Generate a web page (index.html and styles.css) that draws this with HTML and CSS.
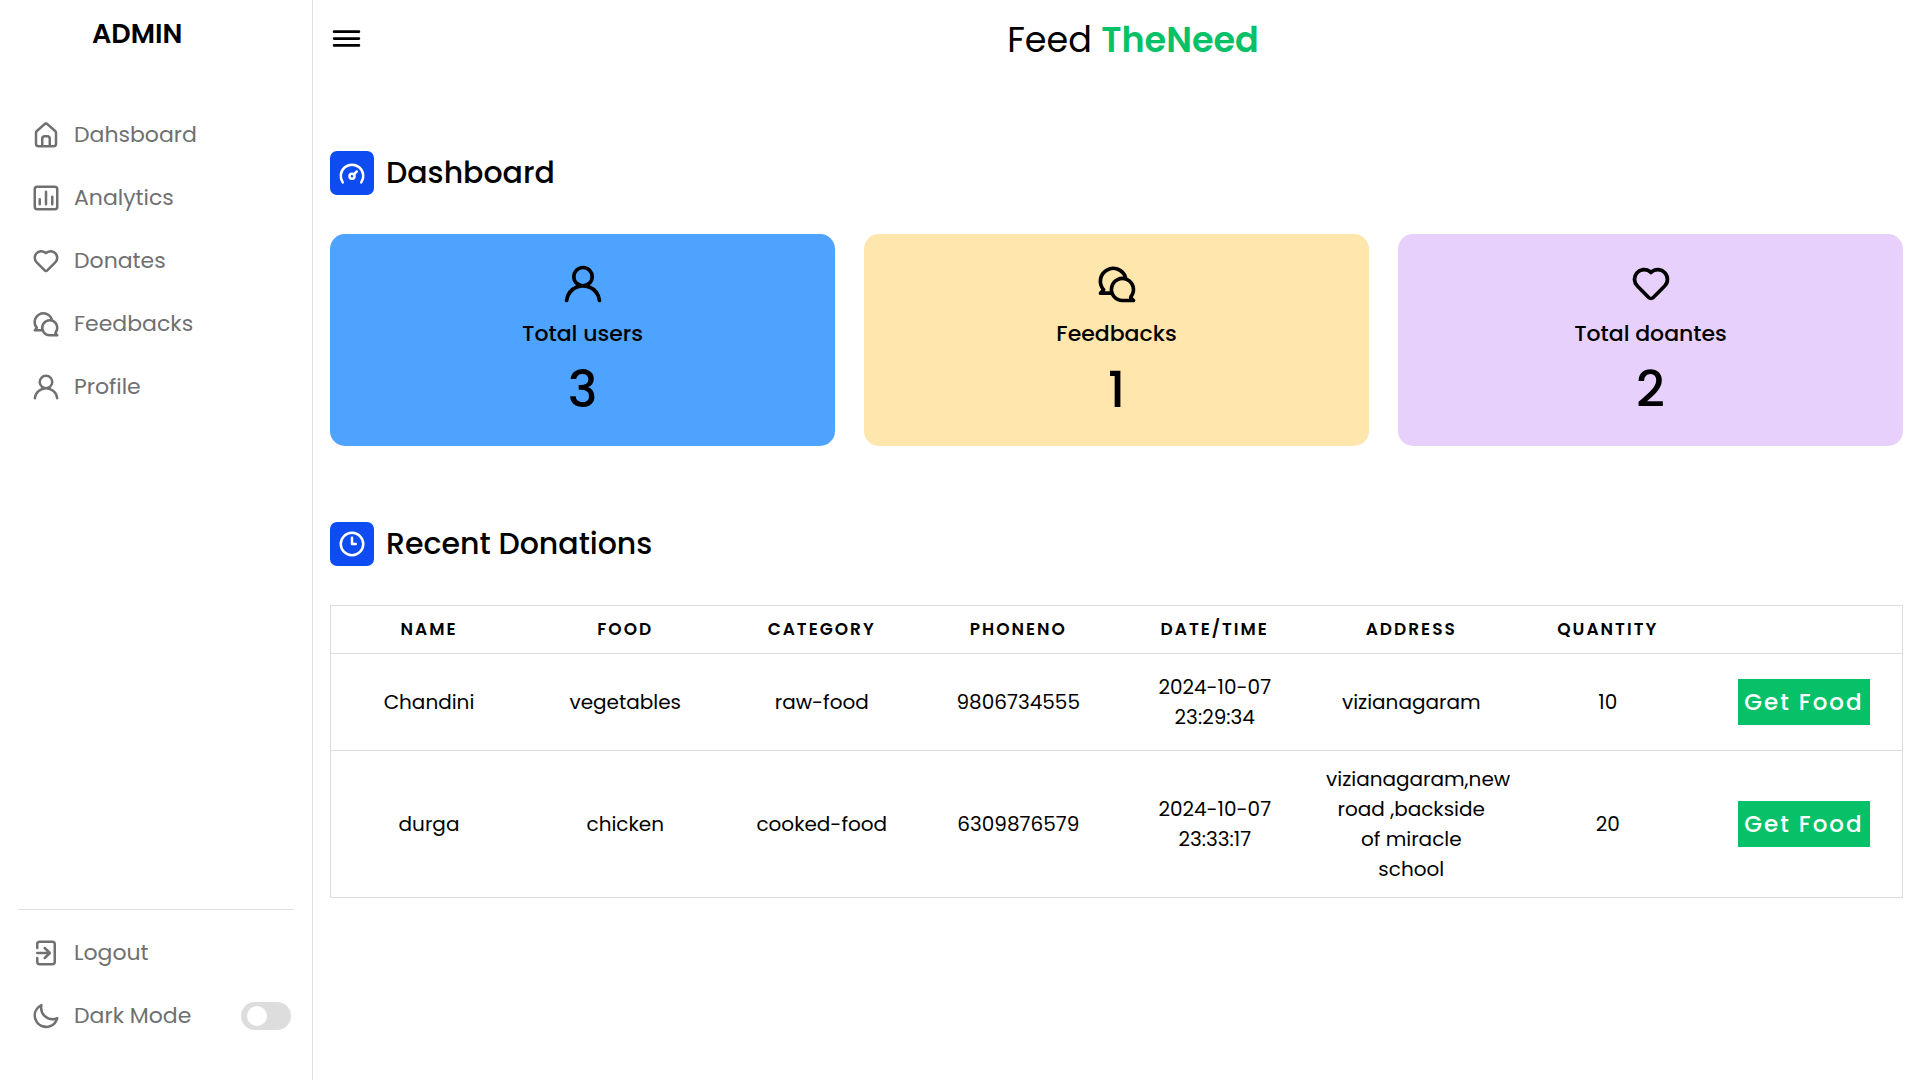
FILE: index.html
```html
<!DOCTYPE html>
<html lang="en">
<head>
  <meta charset="utf-8">
  <meta name="viewport" content="width=device-width, initial-scale=1">
  <title>Admin Dashboard</title>
  <link rel="stylesheet" href="styles.css">
</head>
<body>
  <svg class="sprite" aria-hidden="true">
    <symbol id="i-home" viewBox="0 0 24 24"><path d="M20,8L14,2.74a3,3,0,0,0-4,0L4,8a3,3,0,0,0-1,2.26V19a3,3,0,0,0,3,3H18a3,3,0,0,0,3-3V10.25A3,3,0,0,0,20,8ZM14,20H10V15a1,1,0,0,1,1-1h2a1,1,0,0,1,1,1Zm5-1a1,1,0,0,1-1,1H16V15a3,3,0,0,0-3-3H11a3,3,0,0,0-3,3v5H6a1,1,0,0,1-1-1V10.25a1,1,0,0,1,.34-.75l6-5.25a1,1,0,0,1,1.32,0l6,5.25a1,1,0,0,1,.34.75Z"/></symbol>
    <symbol id="i-chart" viewBox="0 0 24 24"><g fill="none" stroke="currentColor" stroke-width="2" stroke-linecap="round"><rect x="3" y="3" width="18" height="18" rx="2"/><path d="M7 13v4M12 7v10M17 11v6"/></g></symbol>
    <symbol id="i-heart" viewBox="0 0 24 24"><path d="M20.16,5A6.29,6.29,0,0,0,12,4.36a6.27,6.27,0,0,0-8.16,9.48l6.21,6.22a2.78,2.78,0,0,0,3.9,0l6.21-6.22A6.27,6.27,0,0,0,20.16,5Zm-1.41,7.46-6.21,6.21a.76.76,0,0,1-1.08,0L5.25,12.43a4.29,4.29,0,0,1,0-6,4.27,4.27,0,0,1,6,0,1,1,0,0,0,1.42,0,4.27,4.27,0,0,1,6,0A4.29,4.29,0,0,1,18.75,12.43Z"/></symbol>
    <symbol id="i-comments" viewBox="0 0 24 24"><g fill="none" stroke="currentColor" stroke-width="2" stroke-linecap="round" stroke-linejoin="round"><path d="M9 17H3l1.700-1.900A7 7 0 1 1 16.600 8.300"/><path d="M15 21a6 6 0 1 1 4.700-2.300L19.500 19.500 21 21z"/></g></symbol>
    <symbol id="i-user" viewBox="0 0 24 24"><path d="M15.71,12.71a6,6,0,1,0-7.42,0,10,10,0,0,0-6.22,8.18,1,1,0,0,0,2,.22,8,8,0,0,1,15.9,0,1,1,0,0,0,1,.89h.11a1,1,0,0,0,.88-1.1A10,10,0,0,0,15.71,12.71ZM12,12a4,4,0,1,1,4-4A4,4,0,0,1,12,12Z"/></symbol>
    <symbol id="i-signout" viewBox="0 0 24 24"><path d="M4,12a1,1,0,0,0,1,1h7.59l-2.3,2.29a1,1,0,0,0,0,1.42,1,1,0,0,0,1.42,0l4-4a1,1,0,0,0,.21-.33,1,1,0,0,0,0-.76,1,1,0,0,0-.21-.33l-4-4a1,1,0,1,0-1.42,1.42L12.59,11H5A1,1,0,0,0,4,12ZM17,2H7A3,3,0,0,0,4,5V8A1,1,0,0,0,6,8V5A1,1,0,0,1,7,4H17a1,1,0,0,1,1,1V19a1,1,0,0,1-1,1H7a1,1,0,0,1-1-1V16a1,1,0,0,0-2,0v3a3,3,0,0,0,3,3H17a3,3,0,0,0,3-3V5A3,3,0,0,0,17,2Z"/></symbol>
    <symbol id="i-moon" viewBox="0 0 24 24"><path d="M21.64,13a1,1,0,0,0-1.05-.14,8.05,8.05,0,0,1-3.37.73A8.15,8.15,0,0,1,9.08,5.49a8.59,8.59,0,0,1,.25-2A1,1,0,0,0,8,2.36,10.14,10.14,0,1,0,22,14.05,1,1,0,0,0,21.64,13Zm-9.5,6.69A8.14,8.14,0,0,1,7.08,5.22v.27A10.15,10.15,0,0,0,17.22,15.63a9.79,9.79,0,0,0,2.1-.22A8.11,8.11,0,0,1,12.14,19.73Z"/></symbol>
    <symbol id="i-bars" viewBox="0 0 24 24"><path d="M3 7h18M3 12h18M3 17h18" fill="none" stroke="currentColor" stroke-width="2" stroke-linecap="round"/></symbol>
    <symbol id="i-gauge" viewBox="0 0 24 24"><g fill="none" stroke="currentColor" stroke-width="2" stroke-linecap="round"><path d="M4.600 19.500a9 9 0 1 1 14.800 0"/><circle cx="12" cy="14.600" r="2"/><path d="M13.500 13.100l2.300-2.300"/></g></symbol>
    <symbol id="i-clock" viewBox="0 0 24 24"><g fill="none" stroke="currentColor" stroke-width="2" stroke-linecap="round" stroke-linejoin="round"><circle cx="12" cy="12" r="9"/><path d="M12 7v5h3"/></g></symbol>
  </svg>

  <div class="layout">
    <nav class="sidebar" aria-label="Main">
      <div class="brand">ADMIN</div>
      <ul class="menu menu-main">
        <li><a class="menu-link" href="#dashboard"><svg class="icon"><use href="#i-home"/></svg>Dahsboard</a></li>
        <li><a class="menu-link" href="#analytics"><svg class="icon"><use href="#i-chart"/></svg>Analytics</a></li>
        <li><a class="menu-link" href="#donates"><svg class="icon"><use href="#i-heart"/></svg>Donates</a></li>
        <li><a class="menu-link" href="#feedbacks"><svg class="icon"><use href="#i-comments"/></svg>Feedbacks</a></li>
        <li><a class="menu-link" href="#profile"><svg class="icon"><use href="#i-user"/></svg>Profile</a></li>
      </ul>
      <ul class="menu menu-bottom">
        <li><a class="menu-link" href="#logout"><svg class="icon"><use href="#i-signout"/></svg>Logout</a></li>
        <li class="mode">
          <label class="menu-link" for="dark-mode"><svg class="icon"><use href="#i-moon"/></svg>Dark Mode</label>
          <input class="switch" type="checkbox" id="dark-mode">
        </li>
      </ul>
    </nav>

    <main class="main">
      <header class="top">
        <button class="toggle" type="button" aria-label="Toggle sidebar"><svg class="icon-bars"><use href="#i-bars"/></svg></button>
        <p class="logo">Feed <b class="logo-accent">TheNeed</b></p>
      </header>

      <section class="section" id="dashboard">
        <h2 class="title"><span class="title-icon"><svg class="icon"><use href="#i-gauge"/></svg></span>Dashboard</h2>
        <div class="cards">
          <div class="card card-blue"><svg class="card-icon"><use href="#i-user"/></svg><span class="card-label">Total users</span><span class="card-number">3</span></div>
          <div class="card card-yellow"><svg class="card-icon"><use href="#i-comments"/></svg><span class="card-label">Feedbacks</span><span class="card-number">1</span></div>
          <div class="card card-purple"><svg class="card-icon"><use href="#i-heart"/></svg><span class="card-label">Total doantes</span><span class="card-number">2</span></div>
        </div>
      </section>

      <section class="section">
        <h2 class="title"><span class="title-icon"><svg class="icon"><use href="#i-clock"/></svg></span>Recent Donations</h2>
        <table class="table">
          <thead>
            <tr><th scope="col">Name</th><th scope="col">food</th><th scope="col">Category</th><th scope="col">phoneno</th><th scope="col">date/time</th><th scope="col">address</th><th scope="col">Quantity</th><td></td></tr>
          </thead>
          <tbody>
            <tr><td>Chandini</td><td>vegetables</td><td>raw-food</td><td>9806734555</td><td>2024-10-07 23:29:34</td><td>vizianagaram</td><td>10</td><td class="action"><button class="get" type="button">Get Food</button></td></tr>
            <tr><td>durga</td><td>chicken</td><td>cooked-food</td><td>6309876579</td><td>2024-10-07 23:33:17</td><td>vizianagaram,new road ,backside of miracle school</td><td>20</td><td class="action"><button class="get" type="button">Get Food</button></td></tr>
          </tbody>
        </table>
      </section>
    </main>
  </div>
</body>
</html>
```
FILE: styles.css
```css
* {
  box-sizing: border-box;
  margin: 0;
  padding: 0;
}

body {
  font-family: Poppins, "Open Sans", "Noto Sans", sans-serif;
  color: #000;
  background: #fff;
}

svg {
  display: block;
  flex: none;
  fill: currentColor;
}

.sprite {
  display: none;
}

.layout {
  display: flex;
  min-height: 100vh;
}

/* Sidebar */
.sidebar {
  display: flex;
  flex-direction: column;
  flex: none;
  width: 313px;
  padding: 12px 18px;
  border-right: 1px solid #e0e0e0;
}

.brand {
  padding-left: 74px;
  font-size: 27px;
  font-weight: 600;
  line-height: 44px;
}

.menu {
  list-style: none;
}

.menu-main {
  margin-top: 47px;
}

.menu-bottom {
  margin-top: auto;
  padding: 11px 0 21px;
  border-top: 1px solid #e0e0e0;
}

.menu-link {
  display: flex;
  align-items: center;
  gap: 13px;
  height: 63px;
  padding-left: 13px;
  font-size: 22px;
  color: #707070;
  text-decoration: none;
}

.icon {
  width: 30px;
  height: 30px;
}

.mode {
  display: flex;
  align-items: center;
  justify-content: space-between;
  padding-right: 3px;
}

.switch {
  appearance: none;
  width: 50px;
  height: 28px;
  padding: 4px 6px;
  border-radius: 14px;
  background: #ddd;
  cursor: pointer;
}

.switch::before {
  content: "";
  display: block;
  width: 20px;
  height: 20px;
  border-radius: 50%;
  background: #fff;
}

.switch:checked::before {
  margin-left: auto;
}

/* Main column */
.main {
  flex: 1;
  min-width: 0;
  padding: 12px 17px;
}

.top {
  display: flex;
  align-items: center;
  height: 54px;
}

.toggle {
  margin-bottom: 2px;
  border: 0;
  background: none;
  cursor: pointer;
}

.icon-bars {
  width: 33px;
  height: 33px;
}

.logo {
  flex: 1;
  font-size: 35px;
  text-align: center;
}

.logo-accent {
  font-weight: 600;
  color: #06c167;
}

.section {
  padding-top: 85px;
}

.section + .section {
  padding-top: 76px;
}

.title {
  display: flex;
  align-items: center;
  gap: 12px;
  margin-bottom: 39px;
  font-size: 30px;
  font-weight: 500;
  line-height: 44px;
}

.title-icon {
  display: grid;
  place-items: center;
  width: 44px;
  height: 44px;
  border-radius: 7px;
  background: #0e4bf1;
  color: #fff;
}

.cards {
  display: grid;
  grid-template-columns: repeat(3, 1fr);
  gap: 29px;
}

.card {
  display: flex;
  flex-direction: column;
  align-items: center;
  padding: 28px 25px 19px;
  border-radius: 15px;
}

.card-blue {
  background: #4da3ff;
}

.card-yellow {
  background: #ffe6ac;
}

.card-purple {
  background: #e7d1fc;
}

.card-icon {
  width: 44px;
  height: 44px;
}

.card-label {
  margin-top: 10px;
  font-size: 22px;
  font-weight: 500;
  line-height: 36px;
}

.card-number {
  font-size: 50px;
  font-weight: 500;
  line-height: 75px;
}

/* Donations table */
.table {
  width: 100%;
  table-layout: fixed;
  border: 1px solid #dcdcdc;
  border-collapse: collapse;
  font-size: 20px;
  line-height: 30px;
  text-align: center;
}

.table tr {
  border-bottom: 1px solid #dcdcdc;
}

.table td {
  padding: 13px;
}

.table th {
  padding: 9px 13px;
  font-size: 17px;
  font-weight: 600;
  line-height: 29px;
  letter-spacing: 2px;
  text-transform: uppercase;
}

.table thead td {
  padding: 0;
}

.table .action {
  padding: 25px 13px;
}

.get {
  height: 46px;
  padding: 0 6px;
  border: 0;
  background: #06c167;
  color: #fff;
  font: inherit;
  font-size: 23px;
  font-weight: 500;
  letter-spacing: 2px;
  white-space: nowrap;
  cursor: pointer;
}
```
